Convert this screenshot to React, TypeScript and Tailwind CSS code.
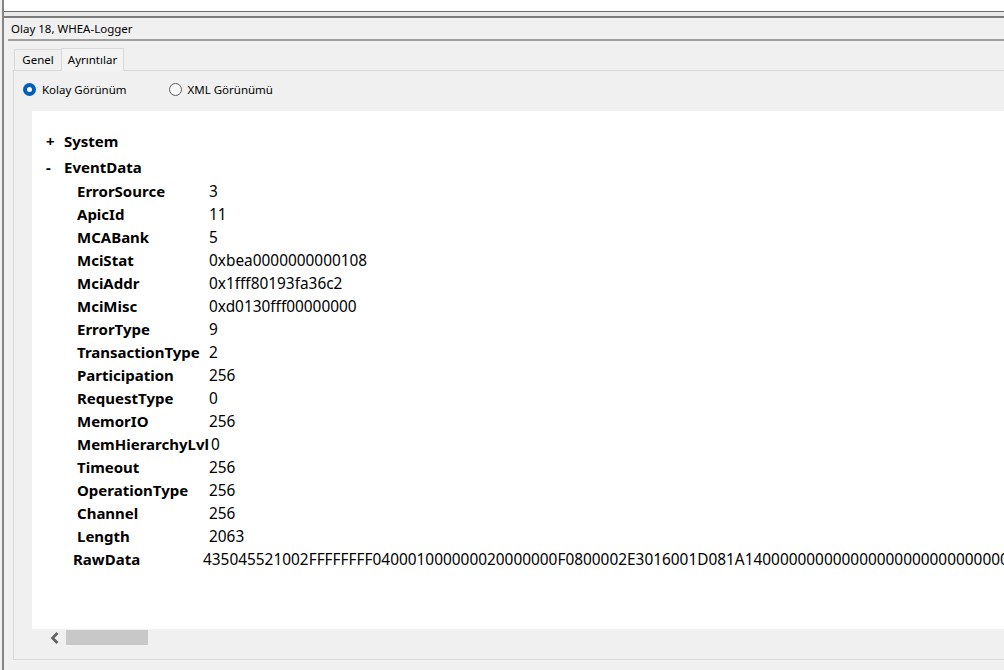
import React from 'react';

const fields: [string, string][] = [
  ['ErrorSource', '3'],
  ['ApicId', '11'],
  ['MCABank', '5'],
  ['MciStat', '0xbea0000000000108'],
  ['MciAddr', '0x1fff80193fa36c2'],
  ['MciMisc', '0xd0130fff00000000'],
  ['ErrorType', '9'],
  ['TransactionType', '2'],
  ['Participation', '256'],
  ['RequestType', '0'],
  ['MemorIO', '256'],
  ['MemHierarchyLvl', '0'],
  ['Timeout', '256'],
  ['OperationType', '256'],
  ['Channel', '256'],
  ['Length', '2063'],
];

const rawData =
  '435045521002FFFFFFFF040001000000020000000F0800002E3016001D081A14000000000000000000000000000000000000000000000000000000000000000000';

const Radio = ({ checked, label }: { checked: boolean; label: string }) => (
  <div className="flex items-center gap-[6px]">
    {checked ? (
      <span className="w-[13px] h-[13px] rounded-full bg-[#005fb8] flex items-center justify-center">
        <span className="w-[5px] h-[5px] rounded-full bg-white" />
      </span>
    ) : (
      <span className="w-[13px] h-[13px] rounded-full border border-[#5c5c5c] bg-[#f7f7f7]" />
    )}
    <span className="text-[11.5px] text-black">{label}</span>
  </div>
);

export default function App() {
  return (
    <div className="w-[1004px] h-[670px] bg-[#f0f0f0] overflow-hidden flex font-['Noto_Sans',sans-serif]">
      {/* outer frame edge */}
      <div className="w-[2px] shrink-0 bg-[#f0f0f0]" />
      <div className="w-[2px] shrink-0 bg-[#858585]" />

      <div className="flex-1 flex flex-col min-w-0">
        {/* list above */}
        <div className="h-[11px] bg-white" />
        <div className="h-px bg-[#6b6b6b]" />
        <div className="h-[4px] bg-[#ebebeb]" />
        <div className="h-[2px] bg-[#7d7d7d]" />

        {/* preview panel */}
        <div className="flex-1 flex flex-col pl-[4px]">
          <div className="h-[21px] flex items-center pl-[3px] text-[11.5px] text-black">
            Olay 18, WHEA-Logger
          </div>
          <div className="h-[2px] bg-[#a0a0a0]" />

          {/* tabs */}
          <div className="h-[29px] flex items-end pl-[6px]">
            <div className="h-[21px] w-[47px] border-l border-t border-[#d9d9d9] flex items-center justify-center text-[11.5px]">
              Genel
            </div>
            <div className="h-[23px] w-[63px] border-l border-t border-r border-[#d9d9d9] bg-[#f3f3f3] flex items-center justify-center text-[11.5px] mb-[-1px] relative z-10">
              Ayrıntılar
            </div>
          </div>

          {/* tab pane */}
          <div className="flex-1 flex flex-col ml-[5px] border-t border-l border-[#d9d9d9] mb-[10px] border-b">
            <div className="h-[40px] flex items-center pl-[9px] pb-[3px] gap-[42px]">
              <Radio checked label="Kolay Görünüm" />
              <Radio checked={false} label="XML Görünümü" />
            </div>

            <div className="ml-[18px] flex-1 flex flex-col">
              <div className="flex-1 bg-white pt-[17px] overflow-hidden text-[15px] text-black whitespace-nowrap">
                <div className="h-[26px] flex items-center pl-[14px] font-bold">
                  <span className="w-[18px]">+</span>
                  <span>System</span>
                </div>
                <div className="h-[26px] flex items-center pl-[14px] font-bold">
                  <span className="w-[18px]">-</span>
                  <span>EventData</span>
                </div>
                {fields.map(([k, v]) => (
                  <div key={k} className="h-[23px] flex items-center pl-[45px]">
                    <span className="min-w-[132px] pr-[2px] font-bold">{k}</span>
                    <span className="text-[15.4px]">{v}</span>
                  </div>
                ))}
                <div className="h-[23px] flex items-center pl-[41px]">
                  <span className="min-w-[130px] font-bold">RawData</span>
                  <span className="text-[15.4px]">{rawData}</span>
                </div>
              </div>

              {/* horizontal scrollbar */}
              <div className="h-[30px] flex items-start pl-[12px] pt-[1px]">
                <div className="w-[22px] h-[15px] flex items-center justify-center">
                  <svg width="12" height="14" viewBox="0 0 12 14">
                    <path d="M8.5 2 L3.5 7 L8.5 12" fill="none" stroke="#606060" strokeWidth="2.6" />
                  </svg>
                </div>
                <div className="w-[82px] h-[15px] bg-[#c8c8c8]" />
              </div>
            </div>
          </div>
        </div>
      </div>
    </div>
  );
}
